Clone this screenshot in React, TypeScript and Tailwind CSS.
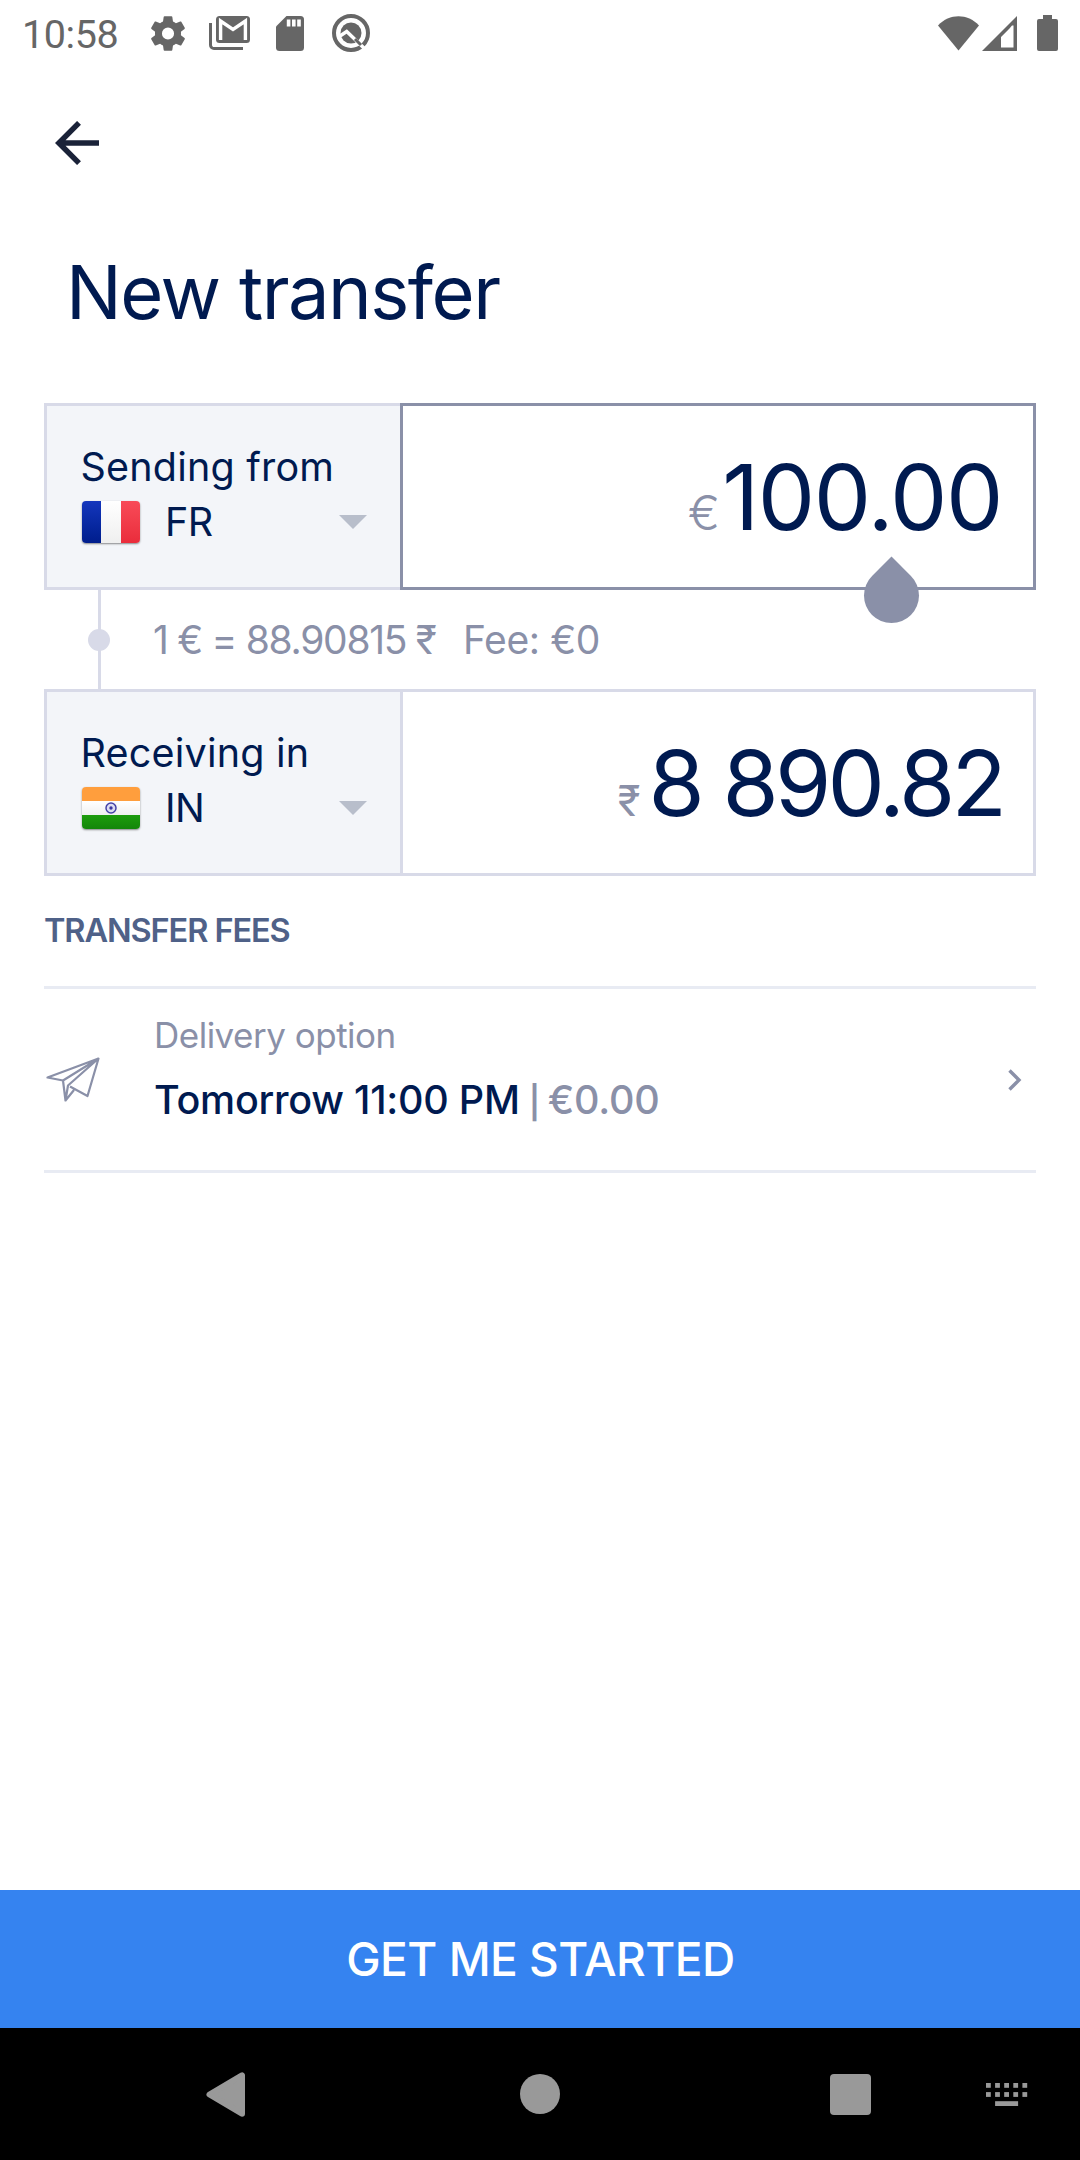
import React from "react";

const StatusBar = () => (
  <header className="flex h-[66px] shrink-0 items-center pl-[22px] pr-[22px] text-[#666666]">
    <span className="mt-[4px] w-[125px] font-[Roboto] text-[39.5px] leading-none tracking-[-0.4px]">10:58</span>
    <svg viewBox="2.2 2 19.6 20" className="ml-[4px] h-[35px] w-[34px]" fill="currentColor">
      <path d="M19.43 12.98c.04-.32.07-.64.07-.98s-.03-.66-.07-.98l2.11-1.65c.19-.15.24-.42.12-.64l-2-3.46c-.12-.22-.39-.3-.61-.22l-2.49 1c-.52-.4-1.08-.73-1.69-.98l-.38-2.65A.49.49 0 0 0 14 2h-4c-.25 0-.46.18-.49.42l-.38 2.65c-.61.25-1.17.59-1.69.98l-2.49-1c-.23-.09-.49 0-.61.22l-2 3.46c-.13.22-.07.49.12.64l2.11 1.65c-.04.32-.07.65-.07.98s.03.66.07.98l-2.11 1.65c-.19.15-.24.42-.12.64l2 3.46c.12.22.39.3.61.22l2.49-1c.52.4 1.08.73 1.69.98l.38 2.65c.03.24.24.42.49.42h4c.25 0 .46-.18.49-.42l.38-2.65c.61-.25 1.17-.59 1.69-.98l2.49 1c.23.09.49 0 .61-.22l2-3.46c.12-.22.07-.49-.12-.64l-2.11-1.65zM12 15.500a3.500 3.500 0 1 1 0-7 3.500 3.500 0 0 1 0 7z" />
    </svg>
    <svg viewBox="0 0 41 34" className="ml-[24px] h-[34px] w-[41px]" fill="none" stroke="currentColor">
      <path d="M1.500 7v22a3.500 3.500 0 0 0 3.500 3.500h29" strokeWidth="3" />
      <rect x="7" y="0" width="34" height="27" rx="3.500" fill="currentColor" stroke="none" />
      <path d="M11.600 24V5l12.400 8.500L36.400 5v19" stroke="white" strokeWidth="3.400" />
    </svg>
    <svg viewBox="0 0 28 35" className="ml-[26px] h-[35px] w-[28px]">
      <path d="M10.500 0H24.500A3.500 3.500 0 0 1 28 3.500V31.500A3.500 3.500 0 0 1 24.500 35H3.500A3.500 3.500 0 0 1 0 31.500V10.500Z" fill="currentColor" />
      <path d="M10.800 3.500h3.600v7h-3.600zM16 3.500h3.600v7H16zM21.200 3.500h3.600v7h-3.600z" fill="white" />
    </svg>
    <svg viewBox="0 0 38 38" className="ml-[28px] h-[38px] w-[38px]" fill="none">
      <circle cx="19" cy="19" r="17" stroke="currentColor" strokeWidth="4" />
      <circle cx="19" cy="19" r="10.500" fill="currentColor" />
      <path d="M6.500 23L14.700 17.500L34 36" stroke="white" strokeWidth="3.400" />
      <path d="M12 25.500L15.500 22L21 27.500C18 30 14 28.500 12 25.500Z" fill="currentColor" />
      <path d="M23 25L29 31" stroke="currentColor" strokeWidth="3" />
    </svg>
    <div className="ml-auto flex items-center">
      <svg viewBox="0 0 41 35" className="h-[35px] w-[41px]" fill="currentColor">
        <path d="M0 9.500C11.500-2.800 29.500-2.800 41 9.500L20.500 34.500Z" />
      </svg>
      <svg viewBox="0 0 35 35" className="ml-[3px] h-[35px] w-[35px]">
        <path d="M35 0V35H0Z" fill="currentColor" />
        <path d="M19 21L27.500 12.500L30 9.500H31.500V31.500H19Z" fill="white" />
      </svg>
      <svg viewBox="0 0 21 36" className="ml-[20px] h-[36px] w-[21px]" fill="currentColor">
        <path d="M6 0H15V4H19A2 2 0 0 1 21 6V34A2 2 0 0 1 19 36H2A2 2 0 0 1 0 34V6A2 2 0 0 1 2 4H6Z" />
      </svg>
    </div>
  </header>
);

const FranceFlag = () => (
  <div className="flex h-[42px] w-[58px] overflow-hidden rounded-[4px] shadow-[0_1px_2px_rgba(0,0,0,0.45)]">
    <div className="flex-1 bg-linear-to-b from-[#1436bd] to-[#001d8c]" />
    <div className="flex-1 bg-linear-to-b from-white to-[#efefef]" />
    <div className="flex-1 bg-linear-to-b from-[#f84a58] to-[#ea2c3b]" />
  </div>
);

const IndiaFlag = () => (
  <div className="flex h-[42px] w-[58px] flex-col overflow-hidden rounded-[4px] shadow-[0_1px_2px_rgba(0,0,0,0.45)]">
    <div className="flex-1 bg-[#ff9e3d]" />
    <div className="flex flex-1 items-center justify-center bg-linear-to-b from-white to-[#f0f0f0]">
      <svg viewBox="0 0 12 12" className="h-[12px] w-[12px]">
        <circle cx="6" cy="6" r="5" fill="#dcdcf2" stroke="#4643a8" strokeWidth="1.500" />
        <circle cx="6" cy="6" r="1.700" fill="#3a379f" />
      </svg>
    </div>
    <div className="flex-1 bg-linear-to-b from-[#1d9c0c] to-[#13860a]" />
  </div>
);

const CountryCell = ({ label, code, flag }: { label: string; code: string; flag: React.ReactNode }) => (
  <button className="flex h-full w-[356px] shrink-0 flex-col border-y-[3px] border-l-[3px] border-[#d8dae8] bg-[#f3f5f9] pt-[36px] pl-[35px] text-left text-[39.5px] leading-[50px] text-[#001a50]">
    <span className="ml-[-1.5px] tracking-[0.2px]">{label}</span>
    <span className="flex h-[60px] w-[285px] items-center">
      {flag}
      <span className="ml-[25px] tracking-[-0.5px]">{code}</span>
      <svg viewBox="0 0 28 14" className="ml-auto h-[14px] w-[28px]" fill="#b8becb">
        <path d="M0 0H28L14 14Z" />
      </svg>
    </span>
  </button>
);

export default function App() {
  return (
    <div className="flex h-[2160px] w-[1080px] flex-col bg-white font-[Inter,'Noto_Sans',sans-serif] text-[#001a50]">
      <StatusBar />
      <div className="flex h-[154px] shrink-0 items-center pl-[55px]">
        <svg viewBox="0 0 44 44" className="h-[44px] w-[44px]" fill="none" stroke="#1a2238" strokeWidth="5.500">
          <path d="M44 22H4M24 1.900L3.900 22L24 42.100" />
        </svg>
      </div>
      <h1 className="ml-[66px] mt-[22px] h-[100px] text-[74px] leading-[100px] tracking-[-1.5px] whitespace-nowrap">New transfer</h1>

      <main className="mx-[44px] mt-[61px] flex flex-1 flex-col">
        <section className="flex h-[187px] shrink-0">
          <CountryCell label="Sending from" code="FR" flag={<FranceFlag />} />
          <div className="relative flex flex-1 items-baseline justify-end border-[3px] border-[#8a90a8] pt-[31px] pr-[31px] leading-[120px]">
            <span className="mr-[2px] text-[48px] font-light text-[#8a90a8]">€</span>
            <span className="text-[91px] tracking-[-1.4px]">100.00</span>
            <div className="absolute top-[162px] left-[461px] h-[55px] w-[55px] rotate-45 rounded-full rounded-tl-none bg-[#8a90a8]" />
          </div>
        </section>

        <section className="flex h-[99px] shrink-0 items-center">
          <div className="ml-[44px] flex h-full w-[22px] items-center justify-center">
            <div className="flex h-full w-[3px] items-center justify-center bg-[#d8dae8]">
              <div className="h-[22px] w-[22px] shrink-0 rounded-full bg-[#d8dae8]" />
            </div>
          </div>
          <p className="ml-[43px] flex text-[39px] leading-[50px] tracking-[-1.3px] whitespace-pre text-[#8a90a8]">
            <span className="w-[310px]">1 € = 88.90815 ₹</span>
            <span className="tracking-[-0.4px]">Fee: €0</span>
          </p>
        </section>

        <section className="flex h-[187px] shrink-0">
          <CountryCell label="Receiving in" code="IN" flag={<IndiaFlag />} />
          <div className="flex flex-1 items-baseline justify-end border-[3px] border-[#d8dae8] pt-[31px] pr-[30px] leading-[120px]">
            <span className="mr-[8px] text-[42px] text-[#8a90a8]">₹</span>
            <span className="text-[91px] tracking-[-3.9px]">8 890.82</span>
          </div>
        </section>

        <h2 className="mt-[30px] h-[50px] text-[32.5px] leading-[50px] font-semibold tracking-[-1.1px] text-[#4f6188]">TRANSFER FEES</h2>

        <section className="mt-[30px] flex h-[187px] shrink-0 items-center border-y-[3px] border-[#e8ebf3]">
          <svg viewBox="44 1055 58 50" className="h-[50px] w-[58px]" fill="none" stroke="#8a90a8" strokeWidth="2.2" strokeLinejoin="round">
            <path d="M98.500 1058.500L47.500 1077.500L63 1080.500ZM63 1080.500L65.500 1100.500L68 1085.500L98.500 1058.500M65.500 1100.500L74 1090M70 1086.500L87.500 1096L98.500 1058.500" />
          </svg>
          <div className="ml-[52px] flex h-full flex-col pt-[20px]">
            <span className="h-[52px] text-[35px] leading-[52px] tracking-[-0.5px] text-[#8a90a8]">Delivery option</span>
            <span className="mt-[14px] flex h-[50px] items-baseline text-[39.5px] leading-[50px] font-medium tracking-[-0.25px] whitespace-pre">
              Tomorrow 11:00 PM
              <span className="ml-[9px] w-[12px] text-[32px] font-semibold text-[#8a90a8]">|</span>
              <span className="ml-[7px] tracking-[-0.2px] text-[#8a90a8]">€0.00</span>
            </span>
          </div>
          <svg viewBox="0 0 14 22" className="mr-[14px] ml-auto h-[22px] w-[14px]" fill="none" stroke="#8a90a8" strokeWidth="3.400">
            <path d="M1.500 1.500L11 11L1.500 20.500" />
          </svg>
        </section>
      </main>

      <button className="h-[138px] shrink-0 bg-[#3583f0] pl-[1px] text-center text-[46px] leading-[137px] font-medium tracking-[-0.5px] text-white">GET ME STARTED</button>

      <nav className="flex h-[132px] shrink-0 items-center bg-black pl-[206px] text-[#999999]">
        <svg viewBox="0 0 39 45" className="h-[45px] w-[39px]" fill="currentColor" stroke="currentColor" strokeWidth="6" strokeLinejoin="round">
          <path d="M3.500 22.500L36 3.300V41.700Z" />
        </svg>
        <div className="ml-[275px] h-[40px] w-[40px] rounded-full bg-[#999999]" />
        <div className="ml-[270px] h-[41px] w-[41px] rounded-[4px] bg-[#999999]" />
        <svg viewBox="0 0 42 23" className="ml-[115px] h-[23px] w-[42px]" fill="currentColor">
          {[0, 9.1, 18.2, 27.3, 36.4].map((x) => (
            <g key={x}>
              <rect x={x} y="0" width="4.800" height="4.800" />
              <rect x={x} y="9.100" width="4.800" height="4.800" />
            </g>
          ))}
          <rect x="9.100" y="18.200" width="23" height="4.800" />
        </svg>
      </nav>
    </div>
  );
}
